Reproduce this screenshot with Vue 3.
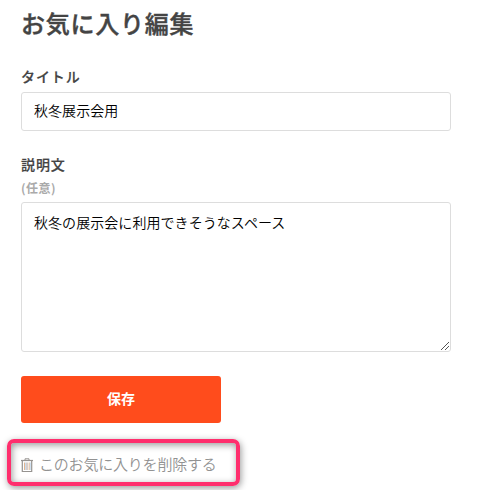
<script setup>
import { ref } from 'vue'

const title = ref('秋冬展示会用')
const description = ref('秋冬の展示会に利用できそうなスペース')
</script>

<template>
  <main class="page">
    <h1 class="heading">お気に入り編集</h1>
    <form class="form" @submit.prevent>
      <label class="label" for="title">タイトル</label>
      <input id="title" v-model="title" class="field input" type="text" />
      <label class="label second" for="description">説明文</label>
      <span class="optional">(任意)</span>
      <div class="area">
        <textarea id="description" v-model="description" class="field textarea" spellcheck="false"></textarea>
        <svg class="grip" width="10" height="10" viewBox="0 0 10 10" shape-rendering="crispEdges">
          <path d="M0 8h1v1H0zM1 7h1v1H1zM2 6h1v1H2zM3 5h1v1H3zM4 4h1v1H4zM5 3h1v1H5zM6 2h1v1H6zM7 1h1v1H7zM4 8h1v1H4zM5 7h1v1H5zM6 6h1v1H6zM7 5h1v1H7z" fill="#555" />
        </svg>
      </div>
      <button class="save" type="submit">保存</button>
    </form>
    <div class="remove">
      <svg class="trash" width="12" height="15" viewBox="0 0 12 15" fill="none">
        <path d="M4 2V.8h4V2" stroke="#969390" />
        <path d="M0 2.5h12" stroke="#969390" stroke-width="1.2" />
        <path d="M1.3 3v10.5h9.4V3" stroke="#969390" stroke-width="1.2" />
        <path d="M3.5 4.5v7.5M8.2 4.5v7.5" stroke="#e3b58f" />
        <path d="M6 4.5v7.5" stroke="#b59c91" />
        <path d="M4.6 4.5v7.5M9.3 4.5v7.5" stroke="#b5cfe8" stroke-width=".8" />
      </svg>
      <a class="link">このお気に入りを削除する</a>
      <div class="highlight"></div>
    </div>
  </main>
</template>

<style>
body {
  margin: 0;
  background: #fff;
}
</style>

<style scoped>
.page {
  box-sizing: border-box;
  height: 490px;
  padding: 5px 27px 0 21px;
  overflow: hidden;
  color: #444;
  font-family: "Noto Sans CJK JP", sans-serif;
}
.heading {
  margin: 0;
  font-size: 24px;
  line-height: 36px;
  font-weight: 500;
  letter-spacing: 0.75px;
  -webkit-text-stroke: 0.4px #444;
}
.form {
  display: flex;
  flex-direction: column;
  margin-top: 25px;
}
.label {
  font-size: 14px;
  line-height: 20px;
  font-weight: 500;
  letter-spacing: 0.9px;
  margin-bottom: 6px;
  -webkit-text-stroke: 0.2px #444;
}
.second {
  margin-top: 23px;
  margin-bottom: 0;
}
.optional {
  margin: 6px 0 6px;
  font-size: 12px;
  line-height: 16px;
  font-weight: 700;
  letter-spacing: 0.5px;
  color: #aaa;
}
.field {
  box-sizing: border-box;
  display: block;
  width: 430px;
  margin: 0;
  border: 1px solid #ddd;
  border-radius: 3px;
  outline: none;
  background: #fff;
  color: #000;
  font: 350 14px/20px "Noto Sans CJK JP", sans-serif;
  letter-spacing: 0.06px;
}
.input {
  height: 39px;
  padding: 7px 12px 11px;
}
.textarea {
  height: 150px;
  padding: 9px 12px;
  resize: none;
  overflow: hidden;
}
.area {
  position: relative;
  width: 430px;
}
.grip {
  position: absolute;
  right: 0;
  bottom: 1px;
}
.save {
  width: 200px;
  height: 47px;
  margin-top: 24px;
  padding: 0 0 4px;
  border: 0;
  border-radius: 3px;
  background: #ff4c1c;
  color: #fff;
  font: 700 14px/20px "Noto Sans CJK JP", sans-serif;
}
.remove {
  position: relative;
  display: flex;
  align-items: center;
  gap: 6px;
  height: 24px;
  margin-top: 30px;
}
.trash {
  flex: none;
}
.link {
  font-size: 15px;
  line-height: 22px;
  padding-bottom: 2px;
  font-weight: 350;
  letter-spacing: -0.2px;
  color: #929292;
}
.highlight {
  position: absolute;
  box-sizing: border-box;
  left: -14px;
  top: -14px;
  width: 233px;
  height: 47px;
  border: 4px solid #ff2e6d;
  border-radius: 7px;
  box-shadow: 1px 2px 7px rgba(0, 0, 0, 0.4), inset 1px 2px 7px rgba(0, 0, 0, 0.4);
}
</style>
